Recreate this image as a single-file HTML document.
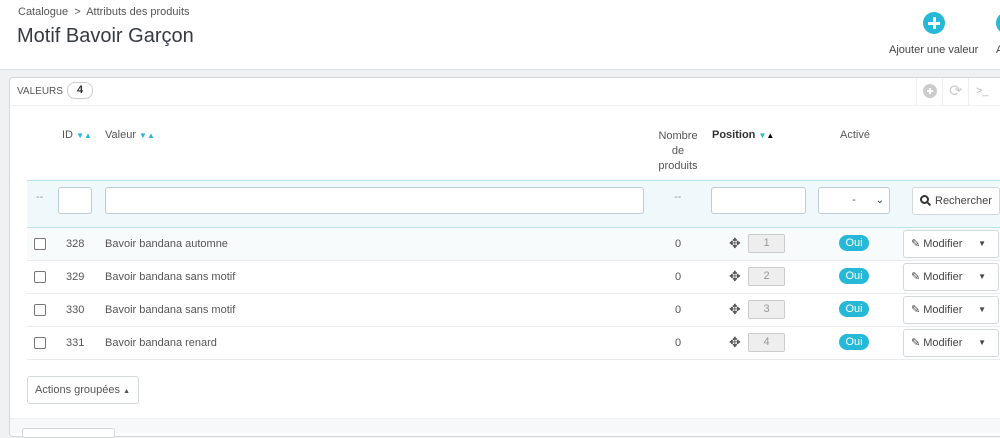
<!DOCTYPE html>
<html><head><meta charset="utf-8"><style>
*{box-sizing:border-box}
body{margin:0;width:1000px;height:433px;overflow:hidden;background:#eff1f2;font-family:"Liberation Sans",sans-serif;color:#555;font-size:11px;position:relative}
.a{position:absolute}
.hdr{left:0;top:0;width:1000px;height:70px;background:#fff;border-bottom:1px solid #dde0e2}
.panel{left:9px;top:77px;width:1000px;height:360px;background:#fff;border:1px solid #d3d8db;border-radius:4px}
.inp{position:absolute;background:#fff;border:1px solid #bbcdd2;border-radius:3px;height:27px}
.btn{position:absolute;background:#fff;border:1px solid #d3d8db;border-radius:3px;height:28px;color:#444}
.oui{position:absolute;left:839px;width:30px;height:16px;border-radius:8px;background:#25b9d7;color:#fff;font-size:11px;text-align:center;line-height:16px}
.cb{position:absolute;left:34px;width:12px;height:12px;border:1px solid #777;border-radius:2px;background:#fff}
.pos{position:absolute;left:748px;width:37px;height:19px;background:#eee;border:1px solid #ccc;border-radius:2px;text-align:center;line-height:17px;color:#999}
.sep{position:absolute;left:27px;width:973px;height:1px;background:#e8ecee}
.s{color:#25b9d7;font-size:8px}
.t{position:absolute}
</style></head><body>
<div class="a hdr"></div>
<div class="a" style="left:18px;top:6px;font-size:11px;color:#555">Catalogue &nbsp;&gt;&nbsp; Attributs des produits</div>
<div class="a" style="left:17px;top:25px;font-size:20px;color:#363a41">Motif Bavoir Garçon</div>
<div class="a" style="left:923px;top:12px;width:22px;height:22px;border-radius:50%;background:#25b9d7"></div>
<div class="a" style="left:928px;top:21.5px;width:12px;height:3px;background:#fff"></div>
<div class="a" style="left:932.5px;top:17px;width:3px;height:12px;background:#fff"></div>
<div class="a" style="left:996px;top:12px;width:22px;height:22px;border-radius:50%;background:#25b9d7"></div>
<div class="a" style="left:889px;top:44px;font-size:11px;color:#444">Ajouter une valeur</div>
<div class="a" style="left:996px;top:44px;font-size:11px;color:#444">A</div>
<div class="a panel"></div>
<div class="a" style="left:10px;top:105px;width:990px;height:1px;background:#eef0f1"></div>
<div class="a" style="left:17px;top:86px;font-size:10px;color:#555">VALEURS</div>
<div class="a" style="left:67px;top:82px;width:26px;height:17px;border:1px solid #ccc;border-radius:8px;text-align:center;font-weight:bold;line-height:15px;font-size:11px;color:#333">4</div>
<div class="a" style="left:916px;top:78px;width:1px;height:27px;background:#eee"></div>
<div class="a" style="left:923px;top:84px;width:14px;height:14px;border-radius:50%;background:#ccc"></div>
<div class="a" style="left:927px;top:90px;width:6px;height:2px;background:#fff"></div>
<div class="a" style="left:929px;top:88px;width:2px;height:6px;background:#fff"></div>
<div class="a" style="left:942px;top:78px;width:1px;height:27px;background:#eee"></div>
<div class="a" style="left:949px;top:81px;font-size:16px;color:#ccc">⟳</div>
<div class="a" style="left:968px;top:78px;width:1px;height:27px;background:#eee"></div>
<div class="a" style="left:976px;top:85px;font-size:11px;color:#bbb">&gt;_</div>

<div class="a" style="left:62px;top:129px">ID <span class="s">▼▲</span></div>
<div class="a" style="left:105px;top:129px">Valeur <span class="s">▼▲</span></div>
<div class="a" style="left:652px;top:129px;width:52px;text-align:center;line-height:15px">Nombre de produits</div>
<div class="a" style="left:712px;top:129px;font-weight:bold;color:#333">Position <span class="s">▼</span><span style="font-size:8px;color:#000">▲</span></div>
<div class="a" style="left:840px;top:129px">Activé</div>

<div class="a" style="left:27px;top:180px;width:973px;height:48px;background:#eff8fb;border-top:1px solid #bfe2ec;border-bottom:1px solid #bfe2ec"></div>
<div class="a" style="left:36px;top:191px;color:#999">--</div>
<div class="inp" style="left:58px;top:187px;width:34px"></div>
<div class="inp" style="left:105px;top:187px;width:539px"></div>
<div class="a" style="left:674px;top:191px;color:#999">--</div>
<div class="inp" style="left:711px;top:187px;width:95px"></div>
<div class="inp" style="left:818px;top:187px;width:72px;text-align:center;line-height:25px">- <span style="position:absolute;right:5px;font-size:10px;color:#333">⌄</span></div>
<div class="btn" style="left:912px;top:187px;width:88px;line-height:26px;padding-left:22px">Rechercher</div>
<div class="a" style="left:920px;top:195px;width:9px;height:9px;border:2px solid #333;border-radius:50%"></div>
<div class="a" style="left:927px;top:203px;width:4px;height:2px;background:#333;transform:rotate(45deg)"></div>

<div class="a" style="left:27px;top:228px;width:973px;height:33px;background:#f8fbfc"></div>
<div class="sep" style="top:260px"></div><div class="sep" style="top:293px"></div><div class="sep" style="top:326px"></div><div class="sep" style="top:359px"></div>

<div class="cb" style="top:238px"></div><div class="t" style="left:66px;top:238px">328</div><div class="t" style="left:105px;top:238px">Bavoir bandana automne</div><div class="t" style="left:675px;top:238px">0</div><div class="t" style="left:729px;top:235px;font-size:14px">✥</div><div class="pos" style="top:234px">1</div><div class="oui" style="top:235px">Oui</div><div class="btn" style="left:903px;top:230px;width:96px;line-height:26px;padding-left:7px">✎ Modifier <span style="position:absolute;right:12px;font-size:8px">▼</span></div>
<div class="cb" style="top:271px"></div><div class="t" style="left:66px;top:271px">329</div><div class="t" style="left:105px;top:271px">Bavoir bandana sans motif</div><div class="t" style="left:675px;top:271px">0</div><div class="t" style="left:729px;top:268px;font-size:14px">✥</div><div class="pos" style="top:267px">2</div><div class="oui" style="top:268px">Oui</div><div class="btn" style="left:903px;top:263px;width:96px;line-height:26px;padding-left:7px">✎ Modifier <span style="position:absolute;right:12px;font-size:8px">▼</span></div>
<div class="cb" style="top:304px"></div><div class="t" style="left:66px;top:304px">330</div><div class="t" style="left:105px;top:304px">Bavoir bandana sans motif</div><div class="t" style="left:675px;top:304px">0</div><div class="t" style="left:729px;top:301px;font-size:14px">✥</div><div class="pos" style="top:300px">3</div><div class="oui" style="top:301px">Oui</div><div class="btn" style="left:903px;top:296px;width:96px;line-height:26px;padding-left:7px">✎ Modifier <span style="position:absolute;right:12px;font-size:8px">▼</span></div>
<div class="cb" style="top:337px"></div><div class="t" style="left:66px;top:337px">331</div><div class="t" style="left:105px;top:337px">Bavoir bandana renard</div><div class="t" style="left:675px;top:337px">0</div><div class="t" style="left:729px;top:334px;font-size:14px">✥</div><div class="pos" style="top:333px">4</div><div class="oui" style="top:334px">Oui</div><div class="btn" style="left:903px;top:329px;width:96px;line-height:26px;padding-left:7px">✎ Modifier <span style="position:absolute;right:12px;font-size:8px">▼</span></div>

<div class="btn" style="left:27px;top:376px;width:112px;line-height:27px;padding-left:7px;color:#555">Actions groupées <span style="font-size:7px">▲</span></div>
<div class="a" style="left:10px;top:418px;width:990px;height:15px;background:#f7f8f9;border-top:1px solid #eef0f1"></div>
<div class="a" style="left:22px;top:428px;width:93px;height:10px;background:#fff;border:1px solid #d3d8db;border-radius:3px"></div>
</body></html>
